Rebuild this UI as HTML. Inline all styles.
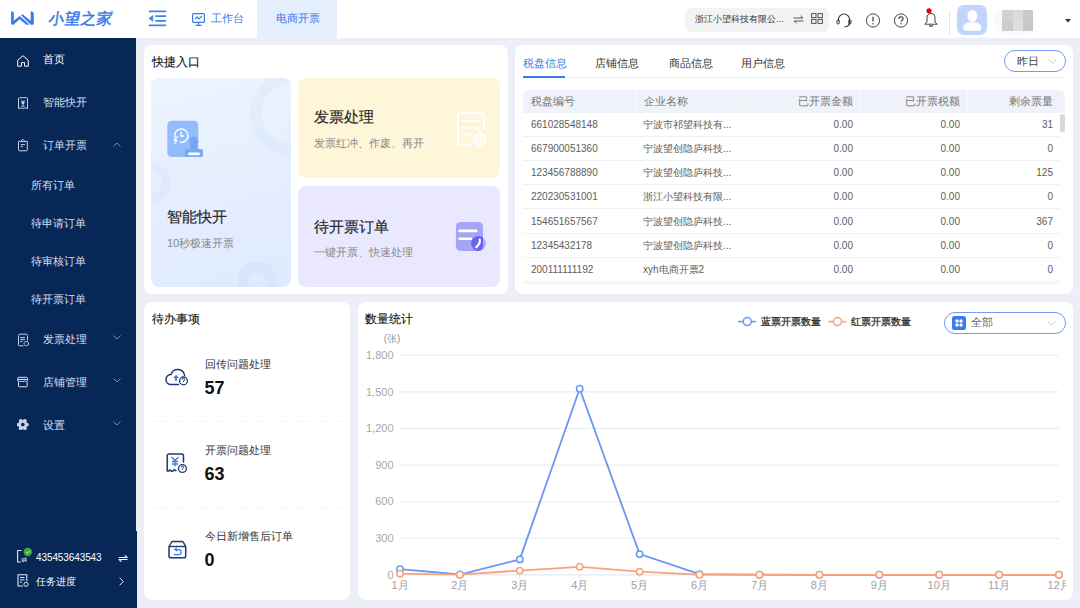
<!DOCTYPE html>
<html><head><meta charset="utf-8">
<style>
*{margin:0;padding:0;box-sizing:border-box}
html,body{width:1080px;height:608px;overflow:hidden;background:#eceff8;font-family:"Liberation Sans",sans-serif;color:#333}
.abs{position:absolute}
#hdr{position:absolute;left:0;top:0;width:1080px;height:38px;background:#fff}
#side{position:absolute;left:0;top:38px;width:136px;height:570px;background:#072857}
.panel{position:absolute;background:#fff;border-radius:8px}
.t{position:absolute;white-space:nowrap;line-height:1}
</style></head>
<body>
<div id="hdr">
  <!-- logo -->
  <svg class="abs" style="left:8px;top:8px" width="30" height="22" viewBox="0 0 30 22">
    <path d="M3.1 4 Q3.1 3 4.1 3.2 Q5.8 3.8 5.8 5 V12.7 L11.6 7.9 L20.9 15.9 Q21.2 16.8 20.2 16.8 H18.3 L11.6 11.3 L5.6 16.6 Q5.3 16.8 4.8 16.8 H4.1 Q3.1 16.8 3.1 15.8 Z" fill="#3b7be6"/>
    <path d="M13.2 7.4 Q13.6 6.2 14.8 6.6 L22.7 12.8 V4.2 Q22.7 3.2 23.7 3.4 Q25.8 4 25.8 5.5 V15.8 Q25.8 16.8 24.8 16.8 H22.9 Z" fill="#3b7be6"/>
  </svg>
  <div class="t" style="left:48px;top:11px;font-size:15.5px;color:#3b7be6;font-weight:500;-webkit-text-stroke:0.5px #3b7be6;transform:skewX(-8deg);transform-origin:0 100%">小望之家</div>
  <div class="t" style="left:110px;top:11px;font-size:5px;color:#3b7be6">&#174;</div>
  <!-- menu icon -->
  <svg class="abs" style="left:144px;top:6px" width="28" height="24" viewBox="0 0 28 24">
    <path d="M5.5 5.3 H21.5 M12 10.1 H21.5 M12 14.8 H21.5 M5.5 19.4 H21.5" stroke="#4382e8" stroke-width="1.7" stroke-linecap="round"/>
    <path d="M4.9 12.4 L8.9 9.4 V15.3 Z" fill="#4382e8" stroke="#4382e8" stroke-width="0.6" stroke-linejoin="round"/>
  </svg>
  <svg class="abs" style="left:192px;top:13px" width="13" height="13" viewBox="0 0 13 13">
    <rect x="0.6" y="0.6" width="11.8" height="8.8" rx="1" fill="none" stroke="#3b7be6" stroke-width="1.2"/>
    <path d="M3 6 L5 4 L7 6 L10 3" fill="none" stroke="#3b7be6" stroke-width="1.1"/>
    <path d="M6.5 9.5 V12 M3.5 12.4 H9.5" stroke="#3b7be6" stroke-width="1.2"/>
  </svg>
  <div class="t" style="left:211px;top:13px;font-size:11px;color:#3b7be6">工作台</div>
  <div class="abs" style="left:257px;top:0;width:80px;height:38px;background:#e5eefc"></div>
  <div class="t" style="left:276px;top:13px;font-size:11px;color:#3b7be6">电商开票</div>
  <div class="abs" style="left:685px;top:7.5px;width:144px;height:24px;border-radius:6px;background:#f2f3f5"></div>
  <div class="t" style="left:695px;top:14.5px;font-size:9.2px;color:#333">浙江小望科技有限公...</div>
  <svg class="abs" style="left:793px;top:15px" width="11" height="9" viewBox="0 0 11 9">
    <path d="M0.5 3 H10 L7.5 0.8 M10.5 6 H1 L3.5 8.2" fill="none" stroke="#555" stroke-width="1"/>
  </svg>
  <svg class="abs" style="left:810.5px;top:13px" width="12" height="11" viewBox="0 0 12 11">
    <rect x="0.6" y="0.6" width="4.4" height="4" fill="none" stroke="#555" stroke-width="1"/>
    <rect x="7" y="0.6" width="4.4" height="4" fill="none" stroke="#555" stroke-width="1"/>
    <rect x="0.6" y="6.4" width="4.4" height="4" fill="none" stroke="#555" stroke-width="1"/>
    <rect x="7" y="6.4" width="4.4" height="4" fill="none" stroke="#555" stroke-width="1"/>
  </svg>
  <svg class="abs" style="left:836px;top:13px" width="16" height="15" viewBox="0 0 16 15">
    <path d="M2.5 8 V6.5 A5.5 5.5 0 0 1 13.5 6.5 V9.5 Q13.5 13.5 8.5 14" fill="none" stroke="#333" stroke-width="1.1"/>
    <rect x="1" y="6.8" width="2.2" height="4.2" rx="1" fill="none" stroke="#333" stroke-width="1"/>
    <rect x="12.8" y="6.8" width="2.2" height="4.2" rx="1" fill="none" stroke="#333" stroke-width="1"/>
  </svg>
  <svg class="abs" style="left:865px;top:12.6px" width="16" height="16" viewBox="0 0 16 16">
    <circle cx="8" cy="7.5" r="6.6" fill="none" stroke="#3a3a3a" stroke-width="0.95"/>
    <path d="M8 3.8 V8.6" stroke="#333" stroke-width="1.2"/><circle cx="8" cy="10.8" r="0.7" fill="#333"/>
  </svg>
  <svg class="abs" style="left:893px;top:12.6px" width="16" height="16" viewBox="0 0 16 16">
    <circle cx="8" cy="7.5" r="6.6" fill="none" stroke="#3a3a3a" stroke-width="0.95"/>
    <path d="M5.9 5.9 Q5.9 3.8 8 3.8 Q10.1 3.8 10.1 5.7 Q10.1 7 8.5 7.6 Q8 7.9 8 8.8" fill="none" stroke="#333" stroke-width="1.1"/><circle cx="8" cy="10.8" r="0.7" fill="#333"/>
  </svg>
  <svg class="abs" style="left:923px;top:7px" width="16" height="21" viewBox="0 0 16 21">
    <path d="M8 6.5 Q4 6.5 4 11 V15 L1.8 17.2 H14.2 L12 15 V11 Q12 6.5 8 6.5 Z" fill="none" stroke="#3a3a3a" stroke-width="0.95" stroke-linejoin="round"/>
    <path d="M6.2 18.3 Q8 20.3 9.8 18.3" fill="none" stroke="#333" stroke-width="1.1"/>
    <circle cx="6" cy="3.8" r="2.6" fill="#e60012"/>
  </svg>
  <div class="abs" style="left:949px;top:11px;width:1px;height:23.5px;background:#e3e5ea"></div>
  <svg class="abs" style="left:957px;top:4.5px" width="30" height="30" viewBox="0 0 30 30">
    <rect width="30" height="30" rx="6.5" fill="#c2d5fb"/>
    <ellipse cx="15.3" cy="11" rx="4.9" ry="6" fill="#fff"/>
    <path d="M6 23 Q6 17.2 15.3 17.2 Q24.5 17.2 24.5 23 Q24.5 25.8 21 25.8 H9.5 Q6 25.8 6 23 Z" fill="#fff"/>
  </svg>
  <div class="abs" style="left:993px;top:9px;width:42px;height:26px;border-radius:13px;background:#fafafa"></div>
  <div class="abs" style="left:1002px;top:10px;width:11px;height:10px;background:#d3d3d3"></div>
  <div class="abs" style="left:1013px;top:10px;width:9.5px;height:10px;background:#dcdcdc"></div>
  <div class="abs" style="left:1022.5px;top:10px;width:10.5px;height:10px;background:#c9c9c9"></div>
  <div class="abs" style="left:1002px;top:20px;width:11px;height:10.5px;background:#cdcdcd"></div>
  <div class="abs" style="left:1013px;top:20px;width:9.5px;height:10.5px;background:#dfdfdf"></div>
  <div class="abs" style="left:1022.5px;top:20px;width:10.5px;height:10.5px;background:#c7c7c7"></div>
  <svg class="abs" style="left:1065px;top:18.5px" width="6" height="4" viewBox="0 0 6 4"><path d="M0 0 H6 L3 3.5 Z" fill="#333"/></svg>
</div>
<div id="side">
  <!-- home -->
  <svg class="abs" style="left:16.5px;top:16.5px" width="12" height="12" viewBox="0 0 12 12">
    <path d="M0.7 5.3 L6 0.7 L11.3 5.3 V11.2 H7.6 V7.6 H4.4 V11.2 H0.7 Z" fill="none" stroke="#fff" stroke-width="1" stroke-linejoin="round"/>
  </svg>
  <div class="t" style="left:43px;top:16.1px;font-size:11px;color:#fff">首页</div>
  <!-- 智能快开 icon -->
  <svg class="abs" style="left:17px;top:59px" width="12" height="13" viewBox="0 0 12 13">
    <path d="M1.5 11.6 V1.9 Q1.5 0.7 2.7 0.7 H9.3 Q10.5 0.7 10.5 1.9 V11.6 Q8.2 10.4 6.6 11.2 L6 12 L5.4 11.2 Q3.8 10.4 1.5 11.6 Z" fill="none" stroke="#c9d2e2" stroke-width="1" stroke-linejoin="round"/>
    <path d="M4.4 3 L6 4.5 L7.6 3 V5.6 Q7.6 7.4 6 7.4 Q4.4 7.4 4.4 5.6 Z" fill="#c9d2e2"/>
    <path d="M6 7 V8.8 M4.3 9.2 H7.7" stroke="#c9d2e2" stroke-width="0.9"/>
  </svg>
  <div class="t" style="left:43px;top:59.1px;font-size:11px;color:#d8dfeb">智能快开</div>
  <!-- clipboard -->
  <svg class="abs" style="left:17px;top:100px" width="12" height="14" viewBox="0 0 12 14">
    <path d="M3.3 3.4 H1.5 V11.8 Q1.5 12.8 2.5 12.8 H9.3 Q10.3 12.8 10.3 11.8 V3.4 H8.1" fill="none" stroke="#c9d2e2" stroke-width="1" stroke-linejoin="round"/>
    <path d="M3.4 3.6 L5.8 1.2 L8.1 3.6 Z" fill="none" stroke="#c9d2e2" stroke-width="1" stroke-linejoin="round"/>
    <path d="M3.8 6.6 H8 M3.8 8.6 H5.9" stroke="#c9d2e2" stroke-width="1"/>
  </svg>
  <div class="t" style="left:43px;top:102.1px;font-size:11px;color:#d8dfeb">订单开票</div>
  <svg class="abs" style="left:113px;top:104px" width="8" height="5" viewBox="0 0 8 5"><path d="M0.5 4.5 L4 1 L7.5 4.5" fill="none" stroke="#8a97b0" stroke-width="0.9"/></svg>
  <div class="t" style="left:31px;top:142.1px;font-size:11px;color:#d8dfeb">所有订单</div>
  <div class="t" style="left:31px;top:180.1px;font-size:11px;color:#d8dfeb">待申请订单</div>
  <div class="t" style="left:31px;top:218.1px;font-size:11px;color:#d8dfeb">待审核订单</div>
  <div class="t" style="left:31px;top:256.1px;font-size:11px;color:#d8dfeb">待开票订单</div>
  <!-- 发票处理 -->
  <svg class="abs" style="left:17px;top:295px" width="13" height="14" viewBox="0 0 13 14">
    <path d="M6.5 12.8 H2.5 Q1.5 12.8 1.5 11.8 V2.5 Q1.5 1.2 2.8 1.2 H9.3 Q10.5 1.2 10.5 2.4 V7.4" fill="none" stroke="#c9d2e2" stroke-width="1" stroke-linejoin="round"/>
    <path d="M3.3 4.6 H8 M3.3 6.6 H8 M3.3 8.6 H5.5" stroke="#c9d2e2" stroke-width="1"/>
    <circle cx="9.3" cy="10.6" r="2.2" fill="none" stroke="#c9d2e2" stroke-width="1.1" stroke-dasharray="1.4 0.5"/>
  </svg>
  <div class="t" style="left:43px;top:296.1px;font-size:11px;color:#d8dfeb">发票处理</div>
  <svg class="abs" style="left:113px;top:297px" width="8" height="5" viewBox="0 0 8 5"><path d="M0.5 0.5 L4 4 L7.5 0.5" fill="none" stroke="#8a97b0" stroke-width="0.9"/></svg>
  <!-- 店铺管理 -->
  <svg class="abs" style="left:17px;top:338px" width="12" height="12" viewBox="0 0 12 12">
    <path d="M1.6 1.3 H9.6 Q10.6 1.3 10.6 2.6 V4.2 Q10.6 5.6 9.3 5.6 Q8.1 5.6 7.7 4.9 Q7 5.6 5.9 5.6 Q4.8 5.6 4.2 4.9 Q3.6 5.6 2.5 5.6 Q0.7 5.6 0.7 4.2 V2.5 Q0.7 1.3 1.6 1.3 Z M0.7 3.4 H10.6" fill="none" stroke="#dfe5ef" stroke-width="1" stroke-linejoin="round"/>
    <path d="M1.5 6.2 V10.2 Q1.5 10.8 2.1 10.8 H9.6 Q10.2 10.8 10.2 10.2 V6.2" fill="none" stroke="#dfe5ef" stroke-width="1"/>
  </svg>
  <div class="t" style="left:43px;top:339.1px;font-size:11px;color:#d8dfeb">店铺管理</div>
  <svg class="abs" style="left:113px;top:340px" width="8" height="5" viewBox="0 0 8 5"><path d="M0.5 0.5 L4 4 L7.5 0.5" fill="none" stroke="#8a97b0" stroke-width="0.9"/></svg>
  <!-- gear -->
  <svg class="abs" style="left:17px;top:381px" width="12" height="12" viewBox="0 0 12 12">
    <circle cx="5.8" cy="5.6" r="4.4" fill="#c9d5ea"/><circle cx="9.90" cy="5.60" r="1.95" fill="#c9d5ea"/><circle cx="7.85" cy="9.15" r="1.95" fill="#c9d5ea"/><circle cx="3.75" cy="9.15" r="1.95" fill="#c9d5ea"/><circle cx="1.70" cy="5.60" r="1.95" fill="#c9d5ea"/><circle cx="3.75" cy="2.05" r="1.95" fill="#c9d5ea"/><circle cx="7.85" cy="2.05" r="1.95" fill="#c9d5ea"/>
    <circle cx="5.8" cy="5.6" r="1.8" fill="#072857"/>
  </svg>
  <div class="t" style="left:43px;top:382.1px;font-size:11px;color:#d8dfeb">设置</div>
  <svg class="abs" style="left:113px;top:383px" width="8" height="5" viewBox="0 0 8 5"><path d="M0.5 0.5 L4 4 L7.5 0.5" fill="none" stroke="#8a97b0" stroke-width="0.9"/></svg>
  <!-- bottom -->
  <svg class="abs" style="left:16px;top:508px" width="16" height="18" viewBox="0 0 16 18">
    <path d="M5.5 4.5 H1.6 V16 H5" fill="none" stroke="#dfe5ef" stroke-width="1.1"/>
    <path d="M5.5 13 H10.5 L9 11.5 M11 14.8 H6 L7.5 16.3" fill="none" stroke="#dfe5ef" stroke-width="1"/>
    <circle cx="11.8" cy="6" r="4.2" fill="#3aab3e"/>
    <path d="M9.8 6 L11.3 7.4 L13.8 4.6" fill="none" stroke="#f3d9a0" stroke-width="1"/>
  </svg>
  <div class="t" style="left:36px;top:514.5px;font-size:10px;color:#fff;letter-spacing:-0.1px">435453643543</div>
  <div class="t" style="left:118px;top:513.5px;font-size:12px;color:#fff">&#8652;</div>
  <svg class="abs" style="left:17px;top:536px" width="12" height="13" viewBox="0 0 12 13">
    <path d="M6 12 H1 V0.8 H9.8 V7" fill="none" stroke="#dfe5ef" stroke-width="1.1"/>
    <path d="M3 3.5 H7.5 M3 5.8 H7.5 M3 8.1 H5" stroke="#dfe5ef" stroke-width="1"/>
    <circle cx="9" cy="10.3" r="2.1" fill="none" stroke="#dfe5ef" stroke-width="1"/>
  </svg>
  <div class="t" style="left:36px;top:538.5px;font-size:10px;color:#fff">任务进度</div>
  <svg class="abs" style="left:119px;top:539px" width="5" height="9" viewBox="0 0 5 9"><path d="M0.6 0.6 L4.2 4.5 L0.6 8.4" fill="none" stroke="#dfe5ef" stroke-width="1"/></svg>
</div>

<div class="panel" style="left:144px;top:45px;width:364px;height:249px">
  <div class="t" style="left:8px;top:11px;font-size:12px;color:#111;font-weight:500;-webkit-text-stroke:0.12px #111">快捷入口</div>
  <!-- card 1 -->
  <div class="abs" style="left:7px;top:33px;width:140px;height:209px;border-radius:8px;background:linear-gradient(165deg,#edf4fe 0%,#e5eefe 55%,#dfeafe 100%);overflow:hidden">
    <div class="abs" style="left:99px;top:-5px;width:82px;height:82px;border-radius:50%;border:11px solid rgba(205,222,250,0.28)"></div>
    <div class="abs" style="left:-20px;top:85px;width:40px;height:40px;border-radius:50%;border:9px solid rgba(205,222,250,0.3)"></div>
    <div class="abs" style="left:86px;top:183px;width:40px;height:40px;border-radius:50%;border:11px solid rgba(200,220,252,0.35)"></div>
    <svg class="abs" style="left:11px;top:37px" width="46" height="47" viewBox="0 0 46 47">
      <rect x="5.3" y="5.8" width="31" height="36.3" rx="4.5" fill="#93bcfb"/>
      <path d="M14.2 24.8 A6.6 6.6 0 1 1 17.5 27" fill="none" stroke="#fff" stroke-width="1.3"/>
      <path d="M19 16.8 V21 H22" fill="none" stroke="#fff" stroke-width="1.3"/>
      <path d="M16 21.2 L12 25.5 H15 L12.2 29" fill="none" stroke="#fff" stroke-width="1.2" stroke-linejoin="round"/>
      <circle cx="31.8" cy="26.3" r="4.5" fill="#74a6f7"/>
      <path d="M28.5 28 H35 L35.5 35 H28 Z" fill="#74a6f7"/>
      <rect x="23" y="34" width="18" height="8" rx="1.8" fill="#78a9f7"/>
      <rect x="26" y="37.4" width="12" height="2.8" rx="1.4" fill="#fff"/>
    </svg>
    <div class="t" style="left:16px;top:131px;font-size:15px;color:#2b2b2b;-webkit-text-stroke:0.2px #2b2b2b">智能快开</div>
    <div class="t" style="left:16px;top:160px;font-size:11px;color:#888">10秒极速开票</div>
  </div>
  <!-- card 2 -->
  <div class="abs" style="left:154px;top:33px;width:202px;height:100px;border-radius:8px;background:#fff5d8">
    <div class="t" style="left:16px;top:31px;font-size:15px;color:#2b2b2b;-webkit-text-stroke:0.2px #2b2b2b">发票处理</div>
    <div class="t" style="left:16px;top:60px;font-size:11px;color:#888">发票红冲、作废、再开</div>
    <svg class="abs" style="left:157px;top:33px" width="36" height="38" viewBox="0 0 36 38">
      <path d="M15 34 H5 Q3 34 3 32 V4 Q3 2 5 2 H26.8 Q28.8 2 28.8 4 V18.4" fill="none" stroke="#fff" stroke-width="2" stroke-linecap="round"/>
      <path d="M7.6 9.9 H23.9 M7.6 16.8 H23.9 M7.6 23.6 H15.4" stroke="#fff" stroke-width="2" stroke-linecap="round"/>
      <path d="M29.46 29.57 L30.74 30.83 L29.77 32.50 L28.04 32.03 L26.02 33.19 L25.56 34.93 L23.64 34.93 L23.18 33.19 L21.16 32.03 L19.43 32.50 L18.46 30.83 L19.74 29.57 L19.74 27.23 L18.46 25.97 L19.43 24.30 L21.16 24.77 L23.18 23.61 L23.64 21.87 L25.56 21.87 L26.02 23.61 L28.04 24.77 L29.77 24.30 L30.74 25.97 L29.46 27.23 Z" fill="none" stroke="#fff" stroke-width="1.9" stroke-linejoin="round"/>
      <circle cx="24.6" cy="28.4" r="2.2" fill="none" stroke="#fff" stroke-width="1.6"/>
    </svg>
  </div>
  <!-- card 3 -->
  <div class="abs" style="left:154px;top:141px;width:202px;height:101px;border-radius:8px;background:#eae8ff">
    <div class="t" style="left:16px;top:33px;font-size:15px;color:#2b2b2b;-webkit-text-stroke:0.2px #2b2b2b">待开票订单</div>
    <div class="t" style="left:16px;top:61px;font-size:11px;color:#888">一键开票、快速处理</div>
    <svg class="abs" style="left:157px;top:36px" width="34" height="32" viewBox="0 0 34 32">
      <defs><clipPath id="rc"><rect x="0.9" y="0" width="27.1" height="28.9" rx="4.5"/></clipPath></defs>
      <rect x="0.9" y="0" width="27.1" height="28.9" rx="4.5" fill="#a3a6f5"/>
      <path d="M4.6 8.9 H21.3 M4.6 16.7 H16.1" stroke="#fff" stroke-width="2.6" stroke-linecap="round"/>
      <circle cx="23.5" cy="21.5" r="7.4" fill="#aeaaf6"/>
      <circle cx="23.5" cy="21.5" r="7.4" fill="#6b62ef" clip-path="url(#rc)"/>
      <path d="M24.7 17.6 Q25.6 21.5 21.2 25.3" fill="none" stroke="#fff" stroke-width="2.2" stroke-linecap="round"/>
    </svg>
  </div>
</div>
<div class="panel" style="left:515px;top:45px;width:558px;height:249px;overflow:hidden">
  <div class="t" style="left:8px;top:13px;font-size:11px;color:#3b7be6">税盘信息</div>
  <div class="t" style="left:80px;top:13px;font-size:11px;color:#333">店铺信息</div>
  <div class="t" style="left:154px;top:13px;font-size:11px;color:#333">商品信息</div>
  <div class="t" style="left:226px;top:13px;font-size:11px;color:#333">用户信息</div>
  <div class="abs" style="left:8px;top:32px;width:542px;height:1px;background:#eceef2"></div>
  <div class="abs" style="left:8px;top:31px;width:42px;height:2px;background:#3b7be6"></div>
  <div class="abs" style="left:489px;top:5px;width:62px;height:22px;border:1px solid #6f9bf0;border-radius:11px"></div>
  <div class="t" style="left:502px;top:11px;font-size:11px;color:#444">昨日</div>
  <svg class="abs" style="left:533px;top:14px" width="9" height="5" viewBox="0 0 9 5"><path d="M0.5 0.5 L4.5 4.3 L8.5 0.5" fill="none" stroke="#c0c4cc" stroke-width="0.9"/></svg>
  <!-- table header -->
  <div class="abs" style="left:8px;top:45px;width:542px;height:23px;background:#eff2f8;border-radius:6px 6px 0 0"></div>
  <div class="abs" style="left:120px;top:45px;width:1px;height:23px;background:#f8f9fc"></div>
  <div class="abs" style="left:231px;top:45px;width:1px;height:23px;background:#f8f9fc"></div>
  <div class="abs" style="left:345px;top:45px;width:1px;height:23px;background:#f8f9fc"></div>
  <div class="abs" style="left:452px;top:45px;width:1px;height:23px;background:#f8f9fc"></div>
  <div class="t" style="left:16px;top:51px;font-size:11px;color:#777">税盘编号</div>
  <div class="t" style="left:129px;top:51px;font-size:11px;color:#777">企业名称</div>
  <div class="t" style="right:220px;top:51px;font-size:11px;color:#777">已开票金额</div>
  <div class="t" style="right:113px;top:51px;font-size:11px;color:#777">已开票税额</div>
  <div class="t" style="right:20px;top:51px;font-size:11px;color:#777">剩余票量</div>
  <div class="abs" style="left:8px;top:68.00px;width:537px;height:24px;border-bottom:1px solid #eef0f4">
    <div class="t" style="left:8px;top:7px;font-size:10px;color:#5e5e5e">661028548148</div>
    <div class="t" style="left:120px;top:7px;font-size:10px;color:#5e5e5e">宁波市祁望科技有...</div>
    <div class="t" style="right:207px;top:7px;font-size:10px;color:#5e5e5e">0.00</div>
    <div class="t" style="right:100px;top:7px;font-size:10px;color:#5e5e5e">0.00</div>
    <div class="t" style="right:7px;top:7px;font-size:10px;color:#5e5e5e">31</div>
  </div><div class="abs" style="left:8px;top:92.15px;width:537px;height:24px;border-bottom:1px solid #eef0f4">
    <div class="t" style="left:8px;top:7px;font-size:10px;color:#5e5e5e">667900051360</div>
    <div class="t" style="left:120px;top:7px;font-size:10px;color:#5e5e5e">宁波望创隐庐科技...</div>
    <div class="t" style="right:207px;top:7px;font-size:10px;color:#5e5e5e">0.00</div>
    <div class="t" style="right:100px;top:7px;font-size:10px;color:#5e5e5e">0.00</div>
    <div class="t" style="right:7px;top:7px;font-size:10px;color:#5e5e5e">0</div>
  </div><div class="abs" style="left:8px;top:116.30px;width:537px;height:24px;border-bottom:1px solid #eef0f4">
    <div class="t" style="left:8px;top:7px;font-size:10px;color:#5e5e5e">123456788890</div>
    <div class="t" style="left:120px;top:7px;font-size:10px;color:#5e5e5e">宁波望创隐庐科技...</div>
    <div class="t" style="right:207px;top:7px;font-size:10px;color:#5e5e5e">0.00</div>
    <div class="t" style="right:100px;top:7px;font-size:10px;color:#5e5e5e">0.00</div>
    <div class="t" style="right:7px;top:7px;font-size:10px;color:#5e5e5e">125</div>
  </div><div class="abs" style="left:8px;top:140.45px;width:537px;height:24px;border-bottom:1px solid #eef0f4">
    <div class="t" style="left:8px;top:7px;font-size:10px;color:#5e5e5e">220230531001</div>
    <div class="t" style="left:120px;top:7px;font-size:10px;color:#5e5e5e">浙江小望科技有限...</div>
    <div class="t" style="right:207px;top:7px;font-size:10px;color:#5e5e5e">0.00</div>
    <div class="t" style="right:100px;top:7px;font-size:10px;color:#5e5e5e">0.00</div>
    <div class="t" style="right:7px;top:7px;font-size:10px;color:#5e5e5e">0</div>
  </div><div class="abs" style="left:8px;top:164.60px;width:537px;height:24px;border-bottom:1px solid #eef0f4">
    <div class="t" style="left:8px;top:7px;font-size:10px;color:#5e5e5e">154651657567</div>
    <div class="t" style="left:120px;top:7px;font-size:10px;color:#5e5e5e">宁波望创隐庐科技...</div>
    <div class="t" style="right:207px;top:7px;font-size:10px;color:#5e5e5e">0.00</div>
    <div class="t" style="right:100px;top:7px;font-size:10px;color:#5e5e5e">0.00</div>
    <div class="t" style="right:7px;top:7px;font-size:10px;color:#5e5e5e">367</div>
  </div><div class="abs" style="left:8px;top:188.75px;width:537px;height:24px;border-bottom:1px solid #eef0f4">
    <div class="t" style="left:8px;top:7px;font-size:10px;color:#5e5e5e">12345432178</div>
    <div class="t" style="left:120px;top:7px;font-size:10px;color:#5e5e5e">宁波望创隐庐科技...</div>
    <div class="t" style="right:207px;top:7px;font-size:10px;color:#5e5e5e">0.00</div>
    <div class="t" style="right:100px;top:7px;font-size:10px;color:#5e5e5e">0.00</div>
    <div class="t" style="right:7px;top:7px;font-size:10px;color:#5e5e5e">0</div>
  </div><div class="abs" style="left:8px;top:212.90px;width:537px;height:24px;border-bottom:1px solid #eef0f4">
    <div class="t" style="left:8px;top:7px;font-size:10px;color:#5e5e5e">200111111192</div>
    <div class="t" style="left:120px;top:7px;font-size:10px;color:#5e5e5e">xyh电商开票2</div>
    <div class="t" style="right:207px;top:7px;font-size:10px;color:#5e5e5e">0.00</div>
    <div class="t" style="right:100px;top:7px;font-size:10px;color:#5e5e5e">0.00</div>
    <div class="t" style="right:7px;top:7px;font-size:10px;color:#5e5e5e">0</div>
  </div>
  <div class="abs" style="left:8px;top:238px;width:537px;height:1px;background:#eef0f4"></div>
  <div class="abs" style="left:545px;top:69px;width:5px;height:18px;border-radius:3px;background:#d8d8d8"></div>
</div>
<div class="panel" style="left:144px;top:302px;width:206px;height:298px">
  <div class="t" style="left:8px;top:11px;font-size:12px;color:#111;font-weight:500;-webkit-text-stroke:0.12px #111">待办事项</div>
  <svg class="abs" style="left:11px;top:53px" width="45" height="45" viewBox="0 0 45 45">
    <path d="M23.5 29.5 H15 A5 5 0 0 1 16 19.6 A7 7 0 0 1 29.6 20.3" fill="none" stroke="#1c3a6e" stroke-width="1.5" stroke-linecap="round"/>
    <circle cx="28.5" cy="25.9" r="3.9" fill="none" stroke="#1c3a6e" stroke-width="1.3"/>
    <path d="M27.3 24.8 Q27.3 23.5 28.5 23.5 Q29.7 23.5 29.7 24.7 Q29.7 25.5 28.5 26 V27" fill="none" stroke="#1c3a6e" stroke-width="1"/>
    <path d="M21 20 L18 23 H19.9 V25.8 H22.1 V23 H24 Z" fill="#3b7be6"/>
  </svg>
  <div class="t" style="left:61px;top:57px;font-size:11px;color:#333">回传问题处理</div>
  <div class="t" style="left:60.5px;top:76.5px;font-size:18px;color:#111;font-weight:bold">57</div>
  <div class="abs" style="left:7px;top:119px;width:192px;height:0;border-top:1px dashed #f3f4f7"></div>
  <svg class="abs" style="left:11px;top:138px" width="45" height="45" viewBox="0 0 45 45">
    <path d="M28.5 22 V16 Q28.5 14 26.5 14 H14.2 Q12.2 14 12.2 16 V31 L14 31 Q15 29.3 16 30.8 Q17.5 32 18.5 30.3 Q19.5 29 20.8 30.8" fill="none" stroke="#1c3a6e" stroke-width="1.5" stroke-linecap="round" stroke-linejoin="round"/>
    <path d="M16.5 17 L20 20.5 L23.5 17 M20 20.5 V26.5 M17 21.5 H23 M17 24 H23" fill="none" stroke="#3b7be6" stroke-width="1.3"/>
    <circle cx="27.4" cy="28.5" r="3.9" fill="none" stroke="#1c3a6e" stroke-width="1.3"/>
    <path d="M26.2 27.4 Q26.2 26.1 27.4 26.1 Q28.6 26.1 28.6 27.3 Q28.6 28.1 27.4 28.6 V29.6" fill="none" stroke="#1c3a6e" stroke-width="1"/>
  </svg>
  <div class="t" style="left:61px;top:143px;font-size:11px;color:#333">开票问题处理</div>
  <div class="t" style="left:60.5px;top:163px;font-size:18px;color:#111;font-weight:bold">63</div>
  <div class="abs" style="left:7px;top:205px;width:192px;height:0;border-top:1px dashed #f3f4f7"></div>
  <svg class="abs" style="left:11px;top:223px" width="45" height="45" viewBox="0 0 45 45">
    <path d="M14 21.5 L16.3 17.5 Q16.8 16.5 18 16.5 H26.8 Q28 16.5 28.5 17.5 L30.7 21.5 V31 Q30.7 32.8 29 32.8 H15.7 Q14 32.8 14 31 Z" fill="none" stroke="#1c3a6e" stroke-width="1.5" stroke-linejoin="round"/>
    <path d="M14 21.5 H30.7" stroke="#1c3a6e" stroke-width="1.4"/>
    <path d="M21.5 22.8 L19.8 24.6 L21.8 25.8 M20 24.6 H24 Q26.2 24.6 26.2 27 Q26.2 29.6 24 29.6 H19.3" fill="none" stroke="#3b7be6" stroke-width="1.2" stroke-linecap="round"/>
  </svg>
  <div class="t" style="left:61px;top:229px;font-size:11px;color:#333">今日新增售后订单</div>
  <div class="t" style="left:60.5px;top:249px;font-size:18px;color:#111;font-weight:bold">0</div>
</div>
<div class="panel" style="left:358px;top:302px;width:715px;height:298px"></div>
<div class="t" style="left:365px;top:313px;font-size:12px;color:#111;font-weight:500;-webkit-text-stroke:0.12px #111">数量统计</div>
<svg class="abs" style="left:0;top:0" width="1066" height="608" viewBox="0 0 1066 608" font-family="Liberation Sans, sans-serif">
  <text x="392" y="341.5" text-anchor="middle" font-size="10" fill="#999">(张)</text>
  <line x1="400" y1="355.1" x2="1059" y2="355.1" stroke="#e9edf5" stroke-width="1.2"/><text x="393.5" y="358.9" text-anchor="end" font-size="11" fill="#a8a8a8">1,800</text><line x1="400" y1="391.8" x2="1059" y2="391.8" stroke="#e9edf5" stroke-width="1.2"/><text x="393.5" y="395.6" text-anchor="end" font-size="11" fill="#a8a8a8">1,500</text><line x1="400" y1="428.4" x2="1059" y2="428.4" stroke="#e9edf5" stroke-width="1.2"/><text x="393.5" y="432.2" text-anchor="end" font-size="11" fill="#a8a8a8">1,200</text><line x1="400" y1="465.0" x2="1059" y2="465.0" stroke="#e9edf5" stroke-width="1.2"/><text x="393.5" y="468.8" text-anchor="end" font-size="11" fill="#a8a8a8">900</text><line x1="400" y1="501.6" x2="1059" y2="501.6" stroke="#e9edf5" stroke-width="1.2"/><text x="393.5" y="505.4" text-anchor="end" font-size="11" fill="#a8a8a8">600</text><line x1="400" y1="538.3" x2="1059" y2="538.3" stroke="#e9edf5" stroke-width="1.2"/><text x="393.5" y="542.1" text-anchor="end" font-size="11" fill="#a8a8a8">300</text><text x="393.5" y="578.7" text-anchor="end" font-size="11" fill="#a8a8a8">0</text><line x1="400" y1="574.9" x2="1059" y2="574.9" stroke="#dfe3ec" stroke-width="1"/><text x="400.0" y="589.3" text-anchor="middle" font-size="11" fill="#a0a0a0">1月</text><line x1="400.0" y1="574.9" x2="400.0" y2="578.4" stroke="#dfe3ec"/><text x="459.9" y="589.3" text-anchor="middle" font-size="11" fill="#a0a0a0">2月</text><line x1="459.9" y1="574.9" x2="459.9" y2="578.4" stroke="#dfe3ec"/><text x="519.8" y="589.3" text-anchor="middle" font-size="11" fill="#a0a0a0">3月</text><line x1="519.8" y1="574.9" x2="519.8" y2="578.4" stroke="#dfe3ec"/><text x="579.7" y="589.3" text-anchor="middle" font-size="11" fill="#a0a0a0">4月</text><line x1="579.7" y1="574.9" x2="579.7" y2="578.4" stroke="#dfe3ec"/><text x="639.6" y="589.3" text-anchor="middle" font-size="11" fill="#a0a0a0">5月</text><line x1="639.6" y1="574.9" x2="639.6" y2="578.4" stroke="#dfe3ec"/><text x="699.5" y="589.3" text-anchor="middle" font-size="11" fill="#a0a0a0">6月</text><line x1="699.5" y1="574.9" x2="699.5" y2="578.4" stroke="#dfe3ec"/><text x="759.5" y="589.3" text-anchor="middle" font-size="11" fill="#a0a0a0">7月</text><line x1="759.5" y1="574.9" x2="759.5" y2="578.4" stroke="#dfe3ec"/><text x="819.4" y="589.3" text-anchor="middle" font-size="11" fill="#a0a0a0">8月</text><line x1="819.4" y1="574.9" x2="819.4" y2="578.4" stroke="#dfe3ec"/><text x="879.3" y="589.3" text-anchor="middle" font-size="11" fill="#a0a0a0">9月</text><line x1="879.3" y1="574.9" x2="879.3" y2="578.4" stroke="#dfe3ec"/><text x="939.2" y="589.3" text-anchor="middle" font-size="11" fill="#a0a0a0">10月</text><line x1="939.2" y1="574.9" x2="939.2" y2="578.4" stroke="#dfe3ec"/><text x="999.1" y="589.3" text-anchor="middle" font-size="11" fill="#a0a0a0">11月</text><line x1="999.1" y1="574.9" x2="999.1" y2="578.4" stroke="#dfe3ec"/><text x="1059.0" y="589.3" text-anchor="middle" font-size="11" fill="#a0a0a0">12月</text><line x1="1059.0" y1="574.9" x2="1059.0" y2="578.4" stroke="#dfe3ec"/>
  <polyline points="400.0,569.2 459.9,574.5 519.8,559.4 579.7,388.7 639.6,554.1 699.5,574.2 759.5,574.7 819.4,574.8 879.3,574.8 939.2,574.8 999.1,574.8 1059.0,574.8" fill="none" stroke="#6a97f2" stroke-width="1.8"/>
  <circle cx="400.0" cy="569.2" r="3.2" fill="#fff" stroke="#6a97f2" stroke-width="1.5"/><circle cx="459.9" cy="574.5" r="3.2" fill="#fff" stroke="#6a97f2" stroke-width="1.5"/><circle cx="519.8" cy="559.4" r="3.2" fill="#fff" stroke="#6a97f2" stroke-width="1.5"/><circle cx="579.7" cy="388.7" r="3.2" fill="#fff" stroke="#6a97f2" stroke-width="1.5"/><circle cx="639.6" cy="554.1" r="3.2" fill="#fff" stroke="#6a97f2" stroke-width="1.5"/><circle cx="699.5" cy="574.2" r="3.2" fill="#fff" stroke="#6a97f2" stroke-width="1.5"/><circle cx="759.5" cy="574.7" r="3.2" fill="#fff" stroke="#6a97f2" stroke-width="1.5"/><circle cx="819.4" cy="574.8" r="3.2" fill="#fff" stroke="#6a97f2" stroke-width="1.5"/><circle cx="879.3" cy="574.8" r="3.2" fill="#fff" stroke="#6a97f2" stroke-width="1.5"/><circle cx="939.2" cy="574.8" r="3.2" fill="#fff" stroke="#6a97f2" stroke-width="1.5"/><circle cx="999.1" cy="574.8" r="3.2" fill="#fff" stroke="#6a97f2" stroke-width="1.5"/><circle cx="1059.0" cy="574.8" r="3.2" fill="#fff" stroke="#6a97f2" stroke-width="1.5"/>
  <polyline points="400.0,573.7 459.9,574.7 519.8,570.6 579.7,566.8 639.6,571.6 699.5,574.7 759.5,574.8 819.4,574.8 879.3,574.8 939.2,574.8 999.1,574.8 1059.0,574.8" fill="none" stroke="#f5a47c" stroke-width="1.8"/>
  <circle cx="400.0" cy="573.7" r="3.2" fill="#fff" stroke="#f5a47c" stroke-width="1.5"/><circle cx="459.9" cy="574.7" r="3.2" fill="#fff" stroke="#f5a47c" stroke-width="1.5"/><circle cx="519.8" cy="570.6" r="3.2" fill="#fff" stroke="#f5a47c" stroke-width="1.5"/><circle cx="579.7" cy="566.8" r="3.2" fill="#fff" stroke="#f5a47c" stroke-width="1.5"/><circle cx="639.6" cy="571.6" r="3.2" fill="#fff" stroke="#f5a47c" stroke-width="1.5"/><circle cx="699.5" cy="574.7" r="3.2" fill="#fff" stroke="#f5a47c" stroke-width="1.5"/><circle cx="759.5" cy="574.8" r="3.2" fill="#fff" stroke="#f5a47c" stroke-width="1.5"/><circle cx="819.4" cy="574.8" r="3.2" fill="#fff" stroke="#f5a47c" stroke-width="1.5"/><circle cx="879.3" cy="574.8" r="3.2" fill="#fff" stroke="#f5a47c" stroke-width="1.5"/><circle cx="939.2" cy="574.8" r="3.2" fill="#fff" stroke="#f5a47c" stroke-width="1.5"/><circle cx="999.1" cy="574.8" r="3.2" fill="#fff" stroke="#f5a47c" stroke-width="1.5"/><circle cx="1059.0" cy="574.8" r="3.2" fill="#fff" stroke="#f5a47c" stroke-width="1.5"/>
  <line x1="738" y1="321.6" x2="756" y2="321.6" stroke="#6a97f2" stroke-width="1.6"/>
  <circle cx="747.3" cy="321.6" r="4" fill="#fff" stroke="#6a97f2" stroke-width="1.5"/>
  <line x1="828.5" y1="321.6" x2="846.5" y2="321.6" stroke="#f5a47c" stroke-width="1.6"/>
  <circle cx="837.5" cy="321.6" r="4" fill="#fff" stroke="#f5a47c" stroke-width="1.5"/>
</svg>
<div class="t" style="left:761px;top:317px;font-size:10px;color:#333;font-weight:500;-webkit-text-stroke:0.3px #333">蓝票开票数量</div>
<div class="t" style="left:851px;top:317px;font-size:10px;color:#333;font-weight:500;-webkit-text-stroke:0.3px #333">红票开票数量</div>
<div class="abs" style="left:944px;top:312px;width:122px;height:22px;border:1px solid #6f9bf0;border-radius:11px"></div>
<svg class="abs" style="left:952px;top:316px" width="14" height="14" viewBox="0 0 14 14">
  <rect width="14" height="14" rx="2.5" fill="#3d7be8"/>
  <rect x="3.5" y="3.5" width="3" height="3" rx="0.6" fill="#fff"/><rect x="7.5" y="3.5" width="3" height="3" rx="0.6" fill="#fff"/>
  <rect x="3.5" y="7.5" width="3" height="3" rx="0.6" fill="#fff"/><rect x="7.5" y="7.5" width="3" height="3" rx="0.6" fill="#fff"/>
</svg>
<div class="t" style="left:971px;top:317px;font-size:11px;color:#666">全部</div>
<svg class="abs" style="left:1047px;top:321px" width="9" height="5" viewBox="0 0 9 5"><path d="M0.5 0.5 L4.5 4.3 L8.5 0.5" fill="none" stroke="#c0c4cc" stroke-width="0.9"/></svg>
<div class="abs" style="left:136px;top:531px;width:1px;height:77px;background:#072857"></div>
</body></html>
